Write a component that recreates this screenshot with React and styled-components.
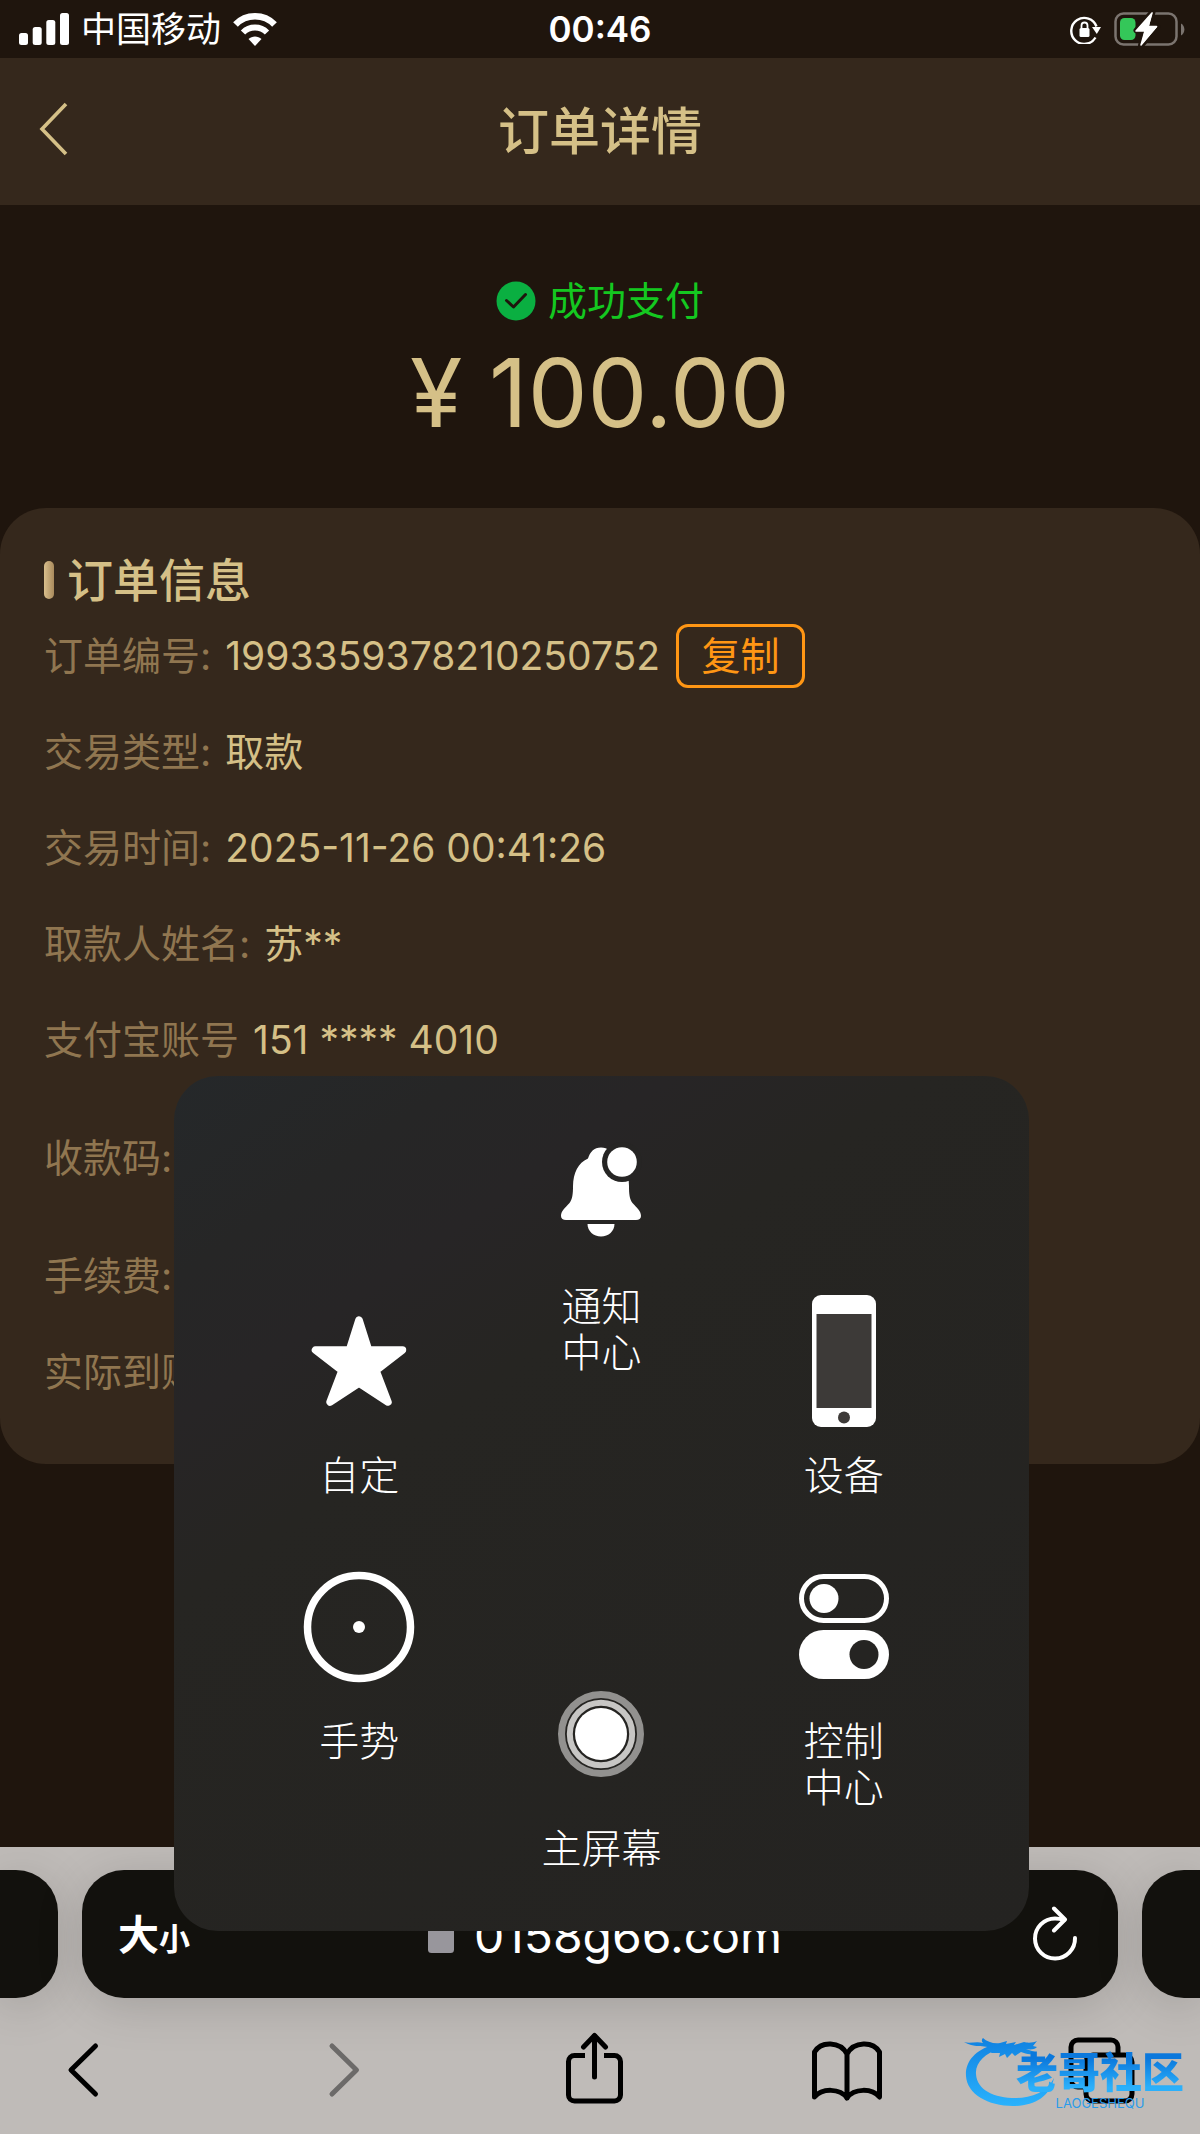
import { useState } from "react";
import styled, { createGlobalStyle } from "styled-components";

const details = [
  { label: "订单编号:", value: "1993359378210250752", copy: true },
  { label: "交易类型:", value: "取款" },
  { label: "交易时间:", value: "2025-11-26 00:41:26" },
  { label: "取款人姓名:", value: "苏**" },
  { label: "支付宝账号", value: "151 **** 4010" },
  { label: "收款码:", value: "", tall: true },
  { label: "手续费:", value: "" },
  { label: "实际到账:", value: "" },
];

const App = () => {
  const [copied, setCopied] = useState(false);

  return (
    <Page>
      <GlobalStyle />
      <StatusBar>
        <StatusSide>
          <SignalIcon />
          <span>中国移动</span>
          <WifiIcon />
        </StatusSide>
        <Clock>00:46</Clock>
        <StatusSide $end>
          <RotationLockIcon />
          <BatteryIcon />
        </StatusSide>
      </StatusBar>

      <Header>
        <BackButton type="button" aria-label="返回">
          <svg width="30" height="54" viewBox="0 0 30 54" fill="none">
            <path d="M28 2 L4 27 L28 52" stroke="#d5c087" strokeWidth="3.600" />
          </svg>
        </BackButton>
        <Title>订单详情</Title>
      </Header>

      <Summary>
        <PayStatus>
          <svg width="40" height="40" viewBox="0 0 40 40" fill="none">
            <circle cx="20" cy="20" r="19.500" fill="#0aaf41" />
            <path d="M10.500 19.500 L17.500 26 L29.500 13.500" stroke="#1f150d" strokeWidth="3" strokeLinecap="round" strokeLinejoin="round" />
          </svg>
          <span>成功支付</span>
        </PayStatus>
        <Amount>¥ 100.00</Amount>
      </Summary>

      <Card>
        <CardTitle>订单信息</CardTitle>
        <Details>
          {details.map((item) => (
            <Row key={item.label} $tall={item.tall}>
              <dt>{item.label}</dt>
              <dd>{item.value}</dd>
              {item.copy && (
                <CopyButton type="button" onClick={() => setCopied(true)} aria-pressed={copied}>
                  复制
                </CopyButton>
              )}
            </Row>
          ))}
        </Details>
      </Card>

      <Browser>
        <AddressRow>
          <Stub />
          <AddressBar>
            <TextSize type="button" aria-label="大小">
              大<small>小</small>
            </TextSize>
            <Url type="button">
              <svg width="26" height="38" viewBox="0 0 26 38" fill="none">
                <path d="M6 18 V9 a7 7 0 0 1 14 0 V18" stroke="#98969c" strokeWidth="3.500" />
                <rect y="11" width="26" height="25" rx="3.500" fill="#98969c" />
              </svg>
              <span>0158g66.com</span>
            </Url>
            <Reload type="button" aria-label="刷新">
              <svg width="46" height="56" viewBox="0 0 46 56" fill="none" stroke="#fff" strokeWidth="4" strokeLinecap="round" strokeLinejoin="round">
                <path d="M43 32 A20 20 0 1 1 23 12.500 C27 12.500 29 13 32 14" />
                <path d="M22 2.500 L33 13.500 L22 24.500" />
              </svg>
            </Reload>
          </AddressBar>
          <Stub $right />
        </AddressRow>
        <Toolbar>
          <ToolButton type="button" aria-label="后退">
            <svg width="70" height="80" viewBox="0 0 70 80">
              <path d="M47.500 16 L23 40 L47.500 64" />
            </svg>
          </ToolButton>
          <ToolButton type="button" aria-label="前进" disabled>
            <svg width="70" height="80" viewBox="0 0 70 80">
              <path d="M29 16 L53.500 40 L29 64" />
            </svg>
          </ToolButton>
          <ToolButton type="button" aria-label="分享">
            <svg width="70" height="80" viewBox="0 0 70 80">
              <path d="M28 25.500 H17.500 a6 6 0 0 0 -6 6 V65 a6 6 0 0 0 6 6 H57.500 a6 6 0 0 0 6 -6 V31.500 a6 6 0 0 0 -6 -6 H47" strokeLinecap="butt" />
              <path d="M37.500 47 V6" />
              <path d="M26.500 17 L37.500 5.500 L48.500 17" />
            </svg>
          </ToolButton>
          <ToolButton type="button" aria-label="书签">
            <svg width="70" height="80" viewBox="0 0 70 80">
              <path d="M35 24 C28 11 9 11 2.500 22 V67 C10 58 28 58 35 68 C42 58 60 58 67.500 67 V22 C61 11 42 11 35 24 V68" />
            </svg>
          </ToolButton>
          <ToolButton type="button" aria-label="标签页">
            <svg width="70" height="80" viewBox="0 0 70 80">
              <path d="M52 23 V17 a7 7 0 0 0 -7 -7 H12 a7 7 0 0 0 -7 7 V50 a7 7 0 0 0 7 7 H18" />
              <rect x="20" y="25" width="46" height="46" rx="7" />
            </svg>
          </ToolButton>
        </Toolbar>
        <Watermark>
          <DragonLogo />
          <WatermarkText>
            <strong>老哥社区</strong>
            <span>LAOGESHEQU</span>
          </WatermarkText>
        </Watermark>
      </Browser>

      <AssistiveMenu>
        <MenuColumn>
          <MenuItem type="button">
            <IconBox>
              <StarIcon />
            </IconBox>
            <span>自定</span>
          </MenuItem>
          <MenuItem type="button">
            <IconBox>
              <svg width="112" height="112" viewBox="0 0 112 112" fill="none">
                <circle cx="56" cy="56" r="51.500" stroke="#fff" strokeWidth="7.500" />
                <circle cx="56" cy="56" r="6" fill="#fff" />
              </svg>
            </IconBox>
            <span>手势</span>
          </MenuItem>
        </MenuColumn>
        <MenuColumn $middle>
          <MenuItem type="button">
            <IconBox>
              <BellIcon />
            </IconBox>
            <span>
              通知
              <br />
              中心
            </span>
          </MenuItem>
          <MenuItem type="button">
            <IconBox>
              <svg width="88" height="88" viewBox="0 0 88 88" fill="none">
                <circle cx="44" cy="44" r="39.500" stroke="#92918f" strokeWidth="7" />
                <circle cx="44" cy="44" r="31.200" stroke="#c7c6c4" strokeWidth="6" />
                <circle cx="44" cy="44" r="26" fill="#fff" />
              </svg>
            </IconBox>
            <span>主屏幕</span>
          </MenuItem>
        </MenuColumn>
        <MenuColumn>
          <MenuItem type="button">
            <IconBox>
              <svg width="64" height="132" viewBox="0 0 64 132">
                <rect width="64" height="132" rx="9" fill="#fff" />
                <rect x="4.500" y="19" width="55" height="94" fill="#3d3a38" />
                <circle cx="32" cy="122.500" r="6" fill="#3d3a38" />
              </svg>
            </IconBox>
            <span>设备</span>
          </MenuItem>
          <MenuItem type="button">
            <IconBox>
              <svg width="90" height="106" viewBox="0 0 90 106" fill="none">
                <rect x="2.500" y="2.500" width="85" height="44" rx="22" stroke="#fff" strokeWidth="5" />
                <circle cx="25" cy="24.500" r="14.500" fill="#fff" />
                <rect y="56" width="90" height="49" rx="24.500" fill="#fff" />
                <circle cx="65" cy="80.500" r="14.500" fill="#252422" />
              </svg>
            </IconBox>
            <span>
              控制
              <br />
              中心
            </span>
          </MenuItem>
        </MenuColumn>
      </AssistiveMenu>
    </Page>
  );
};

const SignalIcon = () => (
  <svg width="50" height="32" viewBox="0 0 50 32" fill="#fff">
    <rect x="0" y="20" width="9" height="12" rx="2.500" />
    <rect x="13.700" y="14" width="9" height="18" rx="2.500" />
    <rect x="27.300" y="7" width="9" height="25" rx="2.500" />
    <rect x="41" y="0" width="9" height="32" rx="2.500" />
  </svg>
);

const WifiIcon = () => (
  <svg width="44" height="33" viewBox="0 0 44 33" fill="none">
    <path d="M2.500 11.500 C13 0.500 31 0.500 41.500 11.500" stroke="#fff" strokeWidth="6.500" />
    <path d="M10 19.500 C16.500 12.800 27.500 12.800 34 19.500" stroke="#fff" strokeWidth="6" />
    <path d="M22 33 L15.500 26 C19 22.500 25 22.500 28.500 26 Z" fill="#fff" />
  </svg>
);

const RotationLockIcon = () => (
  <svg width="32" height="30" viewBox="0 0 32 30" fill="none">
    <path d="M25.500 23.500 A13 13 0 1 1 26.500 12.500" stroke="#fff" strokeWidth="2.400" />
    <path d="M22 13 H31 L26.800 20 Z" fill="#fff" />
    <rect x="9.500" y="14" width="10" height="9" rx="1.500" fill="#fff" />
    <path d="M11.500 14.500 V11.500 a3 3 0 0 1 6 0 V14.500" stroke="#fff" strokeWidth="1.800" />
  </svg>
);

const BatteryIcon = () => (
  <svg width="72" height="36" viewBox="0 0 72 36" fill="none">
    <rect x="1.500" y="2.500" width="61" height="31" rx="8" stroke="#7b746f" strokeWidth="2.500" />
    <path d="M67 12.500 a7 7 0 0 1 0 12 Z" fill="#7b746f" />
    <rect x="6" y="7" width="15.500" height="22" rx="4.500" fill="#34c759" />
    <path d="M38.500 1 L22.500 19.500 H30.500 L27 34.500 L43.500 15.500 H35 Z" fill="#fff" stroke="#1f150d" strokeWidth="6" strokeLinejoin="round" paintOrder="stroke" />
    <path d="M38 2 L22 20 H31 L27 34 L42.500 15.500 H34 Z" fill="#fff" stroke="#fff" strokeWidth="1.500" strokeLinejoin="round" />
  </svg>
);

const StarIcon = () => (
  <svg width="96" height="92" viewBox="0 0 96 92">
    <path d="M48 5 L57.500 35 H91.500 L65 55.500 L77 87 L48 68 L19 87 L31 55.500 L4.500 35 H38.500 Z" fill="#fff" stroke="#fff" strokeWidth="7.500" strokeLinejoin="round" />
  </svg>
);

const BellIcon = () => (
  <svg width="88" height="100" viewBox="0 0 88 100">
    <path
      d="M44 5.500 C37 5.500 33 10 31 16.500 C21 21 16.300 31 16 44 C16 52 15.500 57 12.500 61 C8 66 4 69 4 74 C4 76.500 6 78 9 78 H79 C82 78 84 76.500 84 74 C84 69 80 66 75.500 61 C72.500 57 72 52 72 44 C72 28 66 20 57 16.500 C55 10 51 5.500 44 5.500 Z"
      fill="#fff"
    />
    <circle cx="65" cy="20" r="20" fill="#262524" />
    <circle cx="65" cy="20" r="14.800" fill="#fff" />
    <path d="M30.500 82 H57.500 C57.500 89 51.500 94.500 44 94.500 C36.500 94.500 30.500 89 30.500 82 Z" fill="#fff" />
  </svg>
);

const DragonLogo = () => (
  <svg width="94" height="74" viewBox="0 0 94 74">
    <defs>
      <linearGradient id="dragon" x1="0" y1="0" x2="0" y2="74" gradientUnits="userSpaceOnUse">
        <stop offset="0" stopColor="#0f80e0" />
        <stop offset="1" stopColor="#2bb5ff" />
      </linearGradient>
    </defs>
    <g fill="url(#dragon)">
      <path d="M29 9 C11 14 1 26 2 40 C3 58 24 70 49 70 C70 70 86 61 90 42 C83 56 68 62 52 62 C30 62 13 54 12 38 C11 27 21 17 36 13 Z" />
      <path d="M0 6 C6 8 12 5 19 7 C17 5 18 3 19 2 C23 6 30 8 36 7 L43 5 L42 8 L52 6 L50 9 L60 6 C63 7 69 7 73 5 L69 10 L73 11 C70 14 66 13.500 62 13 L71 16 C68 20 62 18 57 16 L51 20 L48 17 L43 22 L41 18 L35 21 L36 17 L27 17 L29 12 C20 9 9 12 0 6 Z" />
    </g>
  </svg>
);

const GlobalStyle = createGlobalStyle`
  * {
    box-sizing: border-box;
  }
  body {
    margin: 0;
    background: #1f150d;
    font-family: Inter, "Noto Sans CJK SC", sans-serif;
    line-height: 1.2;
  }
  button {
    margin: 0;
    padding: 0;
    border: none;
    background: none;
    color: inherit;
    font: inherit;
    cursor: pointer;
  }
  svg {
    display: block;
    flex-shrink: 0;
  }
`;

const Page = styled.div`
  position: relative;
  min-height: 100vh;
  display: flex;
  flex-direction: column;
  color: #d5c087;
`;

const StatusBar = styled.div`
  height: 58px;
  padding: 0 14px;
  display: grid;
  grid-template-columns: 1fr auto 1fr;
  align-items: center;
  color: #fff;
  font-size: 35px;
`;
const StatusSide = styled.div`
  padding-left: 5px;
  display: flex;
  align-items: center;
  justify-content: ${(props) => (props.$end ? "flex-end" : "flex-start")};
  gap: 12px;
`;
const Clock = styled.div`
  font-weight: 600;
`;

const Header = styled.header`
  height: 147px;
  padding: 0 38px;
  display: grid;
  grid-template-columns: 1fr auto 1fr;
  align-items: center;
  background: #35281c;
`;
const BackButton = styled.button`
  justify-self: start;
  padding-bottom: 6px;
`;
const Title = styled.h1`
  margin: 0;
  font-size: 51px;
  font-weight: 500;
`;

const Summary = styled.section`
  padding: 72px 0 58px;
  display: flex;
  flex-direction: column;
  align-items: center;
`;
const PayStatus = styled.div`
  display: flex;
  align-items: center;
  gap: 12px;
  color: #14c820;
  font-size: 39px;
  line-height: 48px;
`;
const Amount = styled.div`
  margin-top: 10px;
  font-size: 95px;
  line-height: 115px;
`;

const Card = styled.section`
  padding: 44px;
  border-radius: 46px;
  background: #35281c;
`;
const CardTitle = styled.h2`
  margin: 0;
  display: flex;
  align-items: center;
  gap: 13px;
  font-size: 46px;
  line-height: 56px;
  font-weight: 500;

  &::before {
    content: "";
    width: 10px;
    height: 38px;
    border-radius: 5px;
    background: linear-gradient(90deg, #d9bf8c, #a98a5c);
  }
`;
const Details = styled.dl`
  margin: 0;
  font-size: 39px;
`;
const Row = styled.div`
  height: ${(props) => (props.$tall ? "140px" : "96px")};
  display: flex;
  align-items: center;
  white-space: pre;

  dt {
    margin-right: 14px;
    color: #907650;
  }
  dd {
    margin: 0;
  }
`;
const CopyButton = styled.button`
  margin-left: 16px;
  width: 129px;
  height: 64px;
  border: 3px solid #ff9614;
  border-radius: 12px;
  color: #ff9614;
`;

const Browser = styled.footer`
  position: relative;
  margin-top: auto;
  height: 287px;
  padding-top: 23px;
  overflow: hidden;
  background: #bfbbb8;
`;
const AddressRow = styled.div`
  display: flex;
  gap: 24px;
  height: 128px;
`;
const Stub = styled.div`
  width: 58px;
  border-radius: ${(props) => (props.$right ? "42px 0 0 42px" : "0 42px 42px 0")};
  background: #12110d;
  box-shadow: 0 8px 48px rgba(0, 0, 0, 0.15);
`;
const AddressBar = styled.div`
  flex: 1;
  padding: 0 40px 0 36px;
  display: grid;
  grid-template-columns: 1fr auto 1fr;
  align-items: center;
  border-radius: 42px;
  background: #12110d;
  box-shadow: 0 8px 48px rgba(0, 0, 0, 0.15);
  color: #fff;
`;
const TextSize = styled.button`
  justify-self: start;
  padding-top: 4px;
  font-size: 41px;
  font-weight: 700;

  small {
    font-size: 31px;
  }
`;
const Url = styled.button`
  padding: 4px 0 0 14px;
  display: flex;
  align-items: center;
  gap: 20px;
  font-size: 48px;
`;
const Reload = styled.button`
  justify-self: end;
`;
const Toolbar = styled.nav`
  padding: 32px 64px 0 48px;
  display: flex;
  justify-content: space-between;
`;
const ToolButton = styled.button`
  svg {
    fill: none;
    stroke: #000;
    stroke-width: 5;
    stroke-linecap: round;
    stroke-linejoin: round;
  }
  &:disabled svg {
    stroke: #6c6a69;
  }
`;
const Watermark = styled.div`
  position: absolute; /* Stamped over the toolbar corner */
  right: 16px;
  bottom: 24px;
  display: flex;
  align-items: flex-end;
  pointer-events: none;
`;
const WatermarkText = styled.div`
  margin-left: -42px;
  display: flex;
  flex-direction: column;
  align-items: center;

  strong {
    font-size: 42px;
    line-height: 48px;
    font-weight: 900;
    color: transparent;
    background: linear-gradient(180deg, #0b78dc 20%, #2bb0fb 80%);
    background-clip: text;
  }
  span {
    font-size: 13px;
    line-height: 13px;
    color: #2a9bea;
  }
`;

const AssistiveMenu = styled.div`
  position: absolute; /* Floats above both the page and the browser bar */
  left: 174px;
  right: 171px;
  bottom: 203px;
  height: 855px;
  padding: 0 64px;
  display: grid;
  grid-template-columns: repeat(3, 1fr);
  border-radius: 44px;
  background: linear-gradient(145deg, #25282a 0%, #262626 14%, #272526 24%, #262522 36%, #242321 100%);
  color: #fff;
`;
const MenuColumn = styled.div`
  padding: ${(props) => (props.$middle ? "50px 0 13px" : "219px 0 120px")};
  display: flex;
  flex-direction: column;
  justify-content: space-between;
`;
const MenuItem = styled.button`
  height: 250px;
  display: flex;
  flex-direction: column;
  align-items: center;
  gap: 26px;
  font-size: 40px;
  font-weight: 300;
  line-height: 46px;
`;
const IconBox = styled.div`
  height: 132px;
  display: flex;
  align-items: center;
  justify-content: center;
`;

export default App;
